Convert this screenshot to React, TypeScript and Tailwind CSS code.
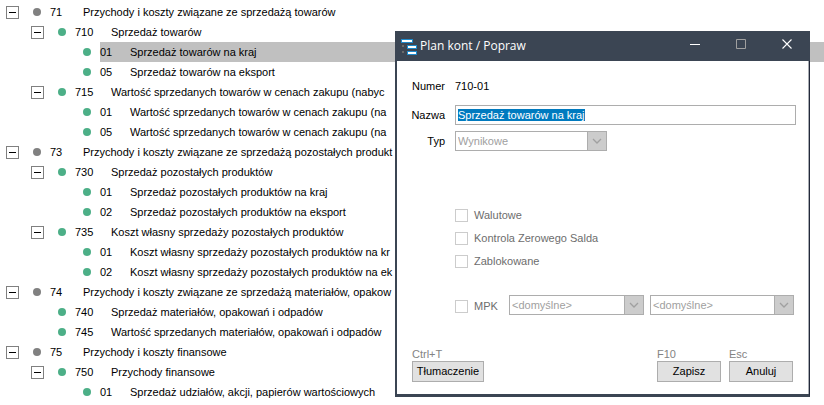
import { useEffect, useRef } from "react";
import type { ReactNode } from "react";

type Account = {
  level: 0 | 1 | 2;
  code: string;
  name: string;
  open?: boolean;
  selected?: boolean;
};

const accounts: Account[] = [
  { level: 0, code: "71", name: "Przychody i koszty związane ze sprzedażą towarów", open: true },
  { level: 1, code: "710", name: "Sprzedaż towarów", open: true },
  { level: 2, code: "01", name: "Sprzedaż towarów na kraj", selected: true },
  { level: 2, code: "05", name: "Sprzedaż towarów na eksport" },
  { level: 1, code: "715", name: "Wartość sprzedanych towarów w cenach zakupu (nabyc", open: true },
  { level: 2, code: "01", name: "Wartość sprzedanych towarów w cenach zakupu (na" },
  { level: 2, code: "05", name: "Wartość sprzedanych towarów w cenach zakupu (na" },
  { level: 0, code: "73", name: "Przychody i koszty związane ze sprzedażą pozostałych produkt", open: true },
  { level: 1, code: "730", name: "Sprzedaż pozostałych produktów", open: true },
  { level: 2, code: "01", name: "Sprzedaż pozostałych produktów na kraj" },
  { level: 2, code: "02", name: "Sprzedaż pozostałych produktów na eksport" },
  { level: 1, code: "735", name: "Koszt własny sprzedaży pozostałych produktów", open: true },
  { level: 2, code: "01", name: "Koszt własny sprzedaży pozostałych produktów na kr" },
  { level: 2, code: "02", name: "Koszt własny sprzedaży pozostałych produktów na ek" },
  { level: 0, code: "74", name: "Przychody i koszty związane ze sprzedażą materiałów, opakow", open: true },
  { level: 1, code: "740", name: "Sprzedaż materiałów, opakowań i odpadów" },
  { level: 1, code: "745", name: "Wartość sprzedanych materiałów, opakowań i odpadów" },
  { level: 0, code: "75", name: "Przychody i koszty finansowe", open: true },
  { level: 1, code: "750", name: "Przychody finansowe", open: true },
  { level: 2, code: "01", name: "Sprzedaż udziałów, akcji, papierów wartościowych" }
];

const indent = ["pl-[6px]", "pl-[31px]", "pl-[56px]"];
const codeWidth = ["w-[33px]", "w-[36px]", "w-[30px]"];

function AccountRow({ level, code, name, open, selected }: Account) {
  return (
    <li className={`flex h-5 items-center ${indent[level]}`}>
      <span className="flex w-[27px] shrink-0">
        {open && (
          <button
            type="button"
            aria-label={`Zwiń ${code}`}
            className="flex size-[13px] items-center justify-center border border-[#808080] bg-white"
          >
            <span className="h-px w-[7px] bg-black" />
          </button>
        )}
      </span>
      <span className="flex w-[17px] shrink-0">
        <span className={`size-2 rounded-full ${level === 0 ? "bg-[#808080]" : "bg-[#4caf87]"}`} />
      </span>
      <span className={`flex h-5 grow items-center ${selected ? "bg-[#c0c0c0]" : ""}`}>
        <span className={`shrink-0 ${codeWidth[level]}`}>{code}</span>
        <span className="whitespace-nowrap">{name}</span>
      </span>
    </li>
  );
}

function Select({ id, label, value, className }: { id: string; label?: string; value: string; className: string }) {
  return (
    <div className={`relative h-5 ${className}`}>
      <select
        id={id}
        aria-label={label}
        disabled
        className="size-full appearance-none border border-[#adadad] bg-white pl-[2px] leading-4 text-[#a0a0a0] opacity-100"
      >
        <option>{value}</option>
      </select>
      <span className="pointer-events-none absolute inset-y-0 right-0 flex w-5 items-center justify-center border border-[#adadad] bg-[#cccccc]">
        <svg viewBox="0 0 10 6" className="h-[6px] w-[10px]" fill="none" stroke="#a0a0a0" strokeWidth="1.3">
          <path d="M1 1l4 4 4-4" />
        </svg>
      </span>
    </div>
  );
}

function Check({ label }: { label: string }) {
  return (
    <label className="flex h-[13px] items-center gap-[6px] text-[#6d6d6d]">
      <input type="checkbox" disabled className="size-[13px] shrink-0 appearance-none border border-[#cccccc] bg-white" />
      {label}
    </label>
  );
}

function Action({ hint, width, children }: { hint: string; width: string; children: ReactNode }) {
  return (
    <div className="flex flex-col">
      <span className="h-[14px] leading-[14px] text-[#838383]">{hint}</span>
      <button type="button" className={`h-[21px] border border-[#adadad] bg-[#e1e1e1] ${width}`}>
        {children}
      </button>
    </div>
  );
}

function TitleBar() {
  return (
    <header className="flex h-[30px] items-center bg-[#3b4553] pr-[17px] pl-[6px] text-white">
      <svg viewBox="0 0 16 18" className="h-[18px] w-4 shrink-0" shapeRendering="crispEdges">
        <path d="M1 8h2v2H1zM1 14h2v2H1z" fill="#6a6a6a" />
        <path d="M0 2h12v4H0zM6 8h10v4H6zM6 14h10v4H6z" fill="#1e88c9" />
        <path d="M1 3h10v2H1zM7 9h8v2H7zM7 15h8v2H7z" fill="#fff" />
      </svg>
      <h1 className="ml-[3px] grow font-['Open_Sans',sans-serif] text-[12px] leading-5">Plan kont / Popraw</h1>
      <div className="flex gap-[35px] pb-[3px]">
        <button type="button" aria-label="Minimalizuj" className="size-[11px]">
          <svg viewBox="0 0 11 11" className="size-full overflow-visible" shapeRendering="crispEdges">
            <path d="M0 5h10v1H0z" fill="#fff" />
          </svg>
        </button>
        <button type="button" aria-label="Maksymalizuj" disabled className="size-[11px]">
          <svg viewBox="0 0 11 11" className="size-full" fill="none" stroke="#a0a0a0">
            <path d="M.5 .5h9v9h-9z" />
          </svg>
        </button>
        <button type="button" aria-label="Zamknij" className="size-[11px]">
          <svg viewBox="0 0 11 11" className="size-full" fill="none" stroke="#fff" strokeWidth="1.1">
            <path d="M.5 .5l9 9M9.500 .5l-9 9" />
          </svg>
        </button>
      </div>
    </header>
  );
}

function AccountDialog() {
  const nameRef = useRef<HTMLInputElement>(null);

  useEffect(() => {
    nameRef.current?.focus();
    nameRef.current?.select();
  }, []);

  return (
    <section
      role="dialog"
      aria-label="Plan kont / Popraw"
      className="absolute top-[31px] right-[14px] left-[395px] bg-white"
    >
      <TitleBar />
      <form className="border-r border-b-[3px] border-l-2 border-r-[#23293a] border-b-[#3b4553] border-l-[#3b4553]">
        <div className="border-r border-[#a9adb3] pt-[15px] pr-[12px] pb-[12px] pl-[14px]">
          <div className="grid grid-cols-[34px_1fr] items-center gap-x-[10px]">
            <span className="text-right">Numer</span>
            <output className="h-5 leading-5">710-01</output>
            <label htmlFor="name" className="mt-[9px] text-right">
              Nazwa
            </label>
            <input
              id="name"
              ref={nameRef}
              defaultValue="Sprzedaż towarów na kraj"
              className="mt-[9px] h-5 w-full border border-[#adadad] px-[2px] outline-none selection:bg-[#007abf] selection:text-white"
            />
            <label htmlFor="type" className="mt-[6px] text-right">
              Typ
            </label>
            <Select id="type" value="Wynikowe" className="mt-[6px] w-[152px]" />
          </div>

          <div className="mt-[58px] flex flex-col gap-[10px] pl-[44px]">
            <Check label="Walutowe" />
            <Check label="Kontrola Zerowego Salda" />
            <Check label="Zablokowane" />
          </div>

          <div className="mt-[27px] flex pr-[2px] pl-[44px]">
            <div className="flex w-[54px] shrink-0 items-center pt-[3px]">
              <Check label="MPK" />
            </div>
            <div className="grid grow grid-cols-[135fr_144fr] gap-[6px]">
              <Select id="mpk-group" label="Grupa MPK" value="<domyślne>" className="w-full" />
              <Select id="mpk" label="MPK" value="<domyślne>" className="w-full" />
            </div>
          </div>

          <div className="mt-8 flex gap-2 pr-[3px] pl-px">
            <div className="grow">
              <Action hint="Ctrl+T" width="w-[72px]">Tłumaczenie</Action>
            </div>
            <Action hint="F10" width="w-16">Zapisz</Action>
            <Action hint="Esc" width="w-16">Anuluj</Action>
          </div>
        </div>
      </form>
    </section>
  );
}

export default function App() {
  return (
    <main className="relative min-h-screen overflow-hidden bg-white font-['Liberation_Sans',Arial,sans-serif] text-[11px] text-black">
      <ul className="pt-[2px]">
        {accounts.map((account, index) => (
          <AccountRow key={index} {...account} />
        ))}
      </ul>
      <AccountDialog />
    </main>
  );
}
